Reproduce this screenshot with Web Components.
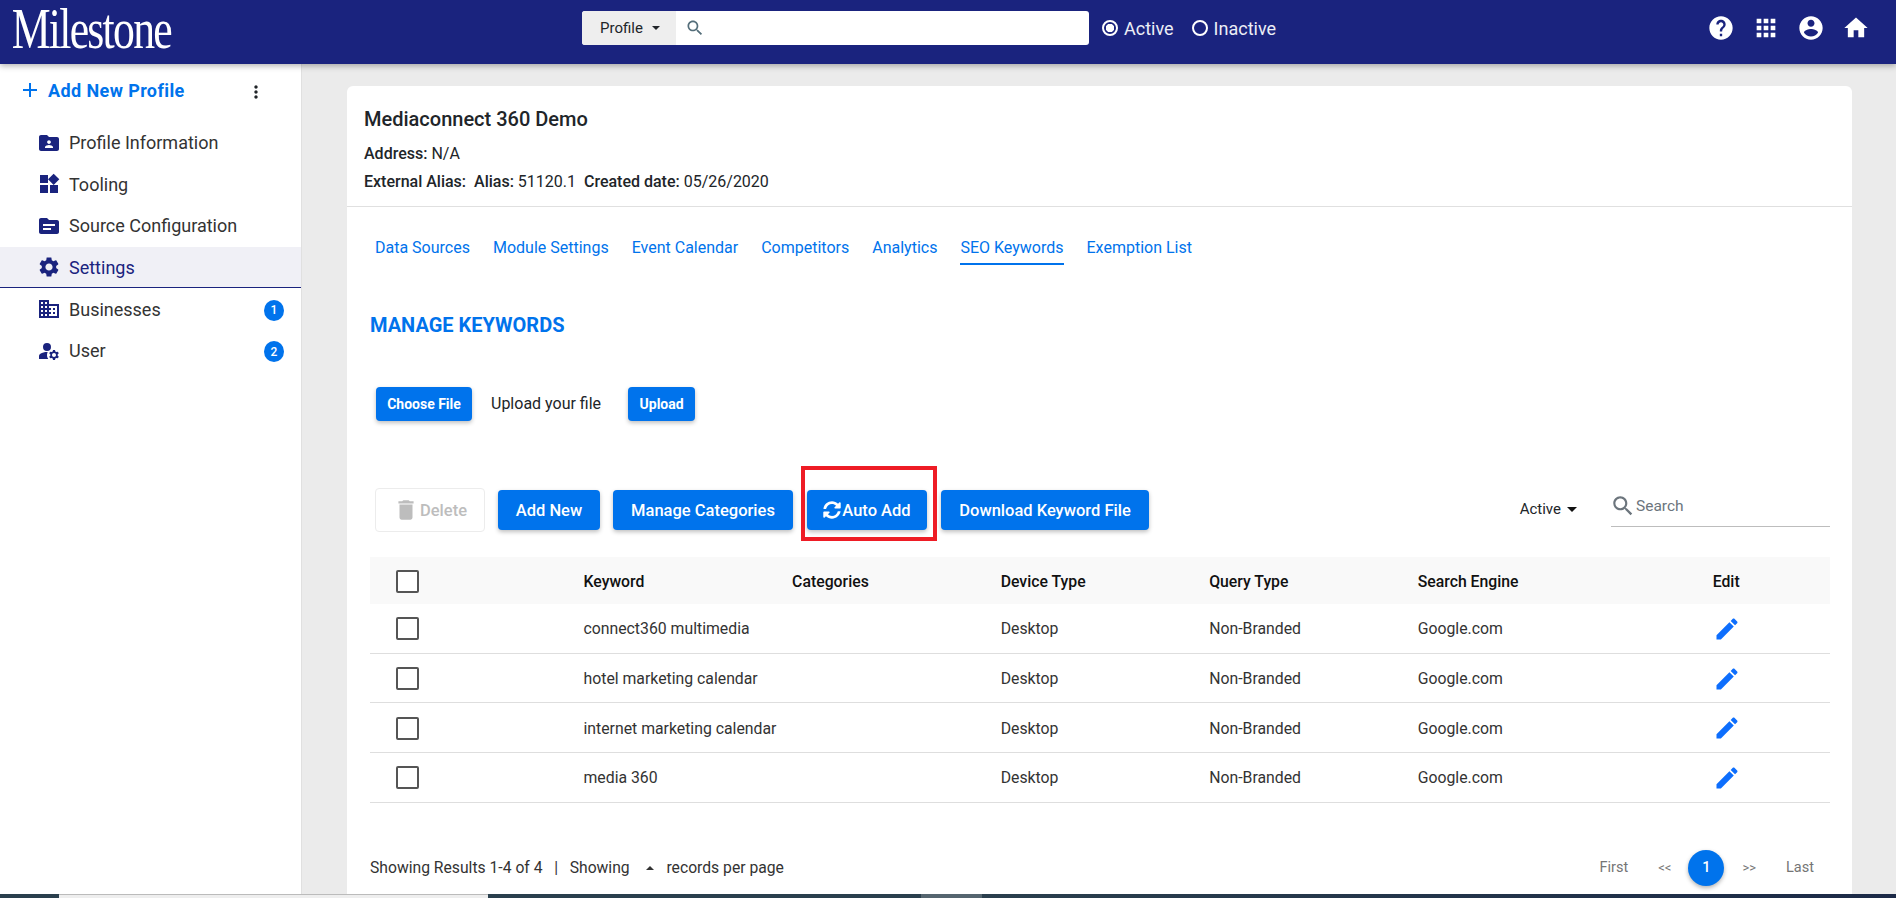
<!DOCTYPE html>
<html lang="en">
<head>
<meta charset="utf-8">
<title>Manage Keywords</title>
<style>
  html, body { margin: 0; height: 100%; overflow: hidden; }
  body { font-family: Roboto, "Liberation Sans", sans-serif; color: #212529; background: #ebebeb; }
  #app { display: flex; flex-direction: column; height: 898px; }
  #body { display: flex; flex: 1; min-height: 0; }
</style>
</head>
<body>
<div id="app">
  <app-header></app-header>
  <div id="body">
    <side-nav></side-nav>
    <profile-page></profile-page>
  </div>
  <bottom-strip></bottom-strip>
</div>

<script>
// material / fontawesome glyphs, drawn with currentColor
const ICONS = {
  help: 'M12 2C6.48 2 2 6.48 2 12s4.48 10 10 10 10-4.48 10-10S17.52 2 12 2zm1 17h-2v-2h2v2zm2.07-7.75l-.9.92C13.45 12.9 13 13.5 13 15h-2v-.5c0-1.1.45-2.1 1.17-2.83l1.24-1.26c.37-.36.59-.86.59-1.41 0-1.1-.9-2-2-2s-2 .9-2 2H8c0-2.21 1.79-4 4-4s4 1.79 4 4c0 .88-.36 1.68-.93 2.25z',
  apps: 'M4 8h4V4H4v4zm6 12h4v-4h-4v4zm-6 0h4v-4H4v4zm0-6h4v-4H4v4zm6 0h4v-4h-4v4zm6-10v4h4V4h-4zm-6 4h4V4h-4v4zm6 6h4v-4h-4v4zm0 6h4v-4h-4v4z',
  account: 'M12 2C6.48 2 2 6.48 2 12s4.48 10 10 10 10-4.48 10-10S17.52 2 12 2zm0 3c1.66 0 3 1.34 3 3s-1.34 3-3 3-3-1.34-3-3 1.34-3 3-3zm0 14.2c-2.5 0-4.71-1.28-6-3.22.03-1.99 4-3.08 6-3.08 1.99 0 5.97 1.09 6 3.08-1.29 1.94-3.5 3.22-6 3.22z',
  home: 'M10 20v-6h4v6h5v-8h3L12 3 2 12h3v8z',
  search: 'M15.5 14h-.79l-.28-.27C15.41 12.59 16 11.11 16 9.5 16 5.91 13.09 3 9.5 3S3 5.91 3 9.5 5.91 16 9.5 16c1.61 0 3.09-.59 4.23-1.57l.27.28v.79l5 4.99L20.49 19l-4.99-5zm-6 0C7.01 14 5 11.99 5 9.5S7.01 5 9.5 5 14 7.01 14 9.5 11.99 14 9.5 14z',
  folderPerson: 'M20 6h-8l-2-2H4c-1.1 0-1.99.9-1.99 2L2 18c0 1.1.9 2 2 2h16c1.1 0 2-.9 2-2V8c0-1.1-.9-2-2-2zm-8 3.2c1 0 1.9.8 1.9 1.9S13 13 12 13s-1.9-.8-1.9-1.9.9-1.9 1.9-1.9zm4 7.8H8v-1c0-1.33 2.67-2 4-2s4 .67 4 2v1z',
  widgets: 'M13 13v8h8v-8h-8zM3 21h8v-8H3v8zM3 3v8h8V3H3zm13.66-1.31L11 7.34 16.66 13l5.66-5.66-5.66-5.65z',
  topic: 'M20 6h-8l-2-2H4c-1.1 0-1.99.9-1.99 2L2 18c0 1.1.9 2 2 2h16c1.1 0 2-.9 2-2V8c0-1.1-.9-2-2-2zm-6 10H6v-2h8v2zm4-4H6v-2h12v2z',
  settings: 'M19.14 12.94c.04-.3.06-.61.06-.94 0-.32-.02-.64-.07-.94l2.03-1.58c.18-.14.23-.41.12-.61l-1.92-3.32c-.12-.22-.37-.29-.59-.22l-2.39.96c-.5-.38-1.03-.7-1.62-.94l-.36-2.54c-.04-.24-.24-.41-.48-.41h-3.84c-.24 0-.43.17-.47.41l-.36 2.54c-.59.24-1.13.57-1.62.94l-2.39-.96c-.22-.08-.47 0-.59.22L2.74 8.87c-.12.21-.08.47.12.61l2.03 1.58c-.05.3-.09.63-.09.94s.02.64.07.94l-2.03 1.58c-.18.14-.23.41-.12.61l1.92 3.32c.12.22.37.29.59.22l2.39-.96c.5.38 1.03.7 1.62.94l.36 2.54c.05.24.24.41.48.41h3.84c.24 0 .44-.17.47-.41l.36-2.54c.59-.24 1.13-.56 1.62-.94l2.39.96c.22.08.47 0 .59-.22l1.92-3.32c.12-.22.07-.47-.12-.61l-2.01-1.58zM12 15.6c-1.98 0-3.6-1.62-3.6-3.6s1.62-3.6 3.6-3.6 3.6 1.62 3.6 3.6-1.62 3.6-3.6 3.6z',
  domain: 'M12 7V3H2v18h20V7H12zM6 19H4v-2h2v2zm0-4H4v-2h2v2zm0-4H4V9h2v2zm0-4H4V5h2v2zm4 12H8v-2h2v2zm0-4H8v-2h2v2zm0-4H8V9h2v2zm0-4H8V5h2v2zm10 12h-8v-2h2v-2h-2v-2h2v-2h-2V9h8v10zm-2-8h-2v2h2v-2zm0 4h-2v2h2v-2z',
  manageUser: 'M10 4a4 4 0 1 0 0 8 4 4 0 0 0 0-8zM10.67 13.02C10.45 13.01 10.23 13 10 13c-2.42 0-4.68.67-6.61 1.82-.88.52-1.39 1.5-1.39 2.53V20h9.26c-.79-1.13-1.26-2.51-1.26-4 0-1.07.25-2.07.67-2.98zM20.75 16c0-.22-.03-.42-.06-.63l1.14-1.01-1-1.73-1.45.49c-.32-.27-.68-.48-1.08-.63L18 11h-2l-.3 1.49c-.4.15-.76.36-1.08.63l-1.45-.49-1 1.73 1.14 1.01c-.03.21-.06.41-.06.63s.03.42.06.63l-1.14 1.01 1 1.73 1.45-.49c.32.27.68.48 1.08.63L16 21h2l.3-1.49c.4-.15.76-.36 1.08-.63l1.45.49 1-1.73-1.14-1.01c.03-.21.06-.41.06-.63zM17 18c-1.1 0-2-.9-2-2s.9-2 2-2 2 .9 2 2-.9 2-2 2z',
  edit: 'M3 17.25V21h3.75L17.81 9.94l-3.75-3.75L3 17.25zM20.71 7.04c.39-.39.39-1.02 0-1.41l-2.34-2.34c-.39-.39-1.02-.39-1.41 0l-1.83 1.83 3.75 3.75 1.83-1.83z',
  trash: 'M6 19c0 1.1.9 2 2 2h8c1.1 0 2-.9 2-2V7H6v12zM19 4h-3.5l-1-1h-5l-1 1H5v2h14V4z',
  plus: 'M19 13h-6v6h-2v-6H5v-2h6V5h2v6h6v2z',
  kebab: 'M12 8c1.1 0 2-.9 2-2s-.9-2-2-2-2 .9-2 2 .9 2 2 2zm0 2c-1.1 0-2 .9-2 2s.9 2 2 2 2-.9 2-2-.9-2-2-2zm0 6c-1.1 0-2 .9-2 2s.9 2 2 2 2-.9 2-2-.9-2-2-2z',
};
const SYNC = 'M370.72 133.28C339.458 104.008 298.888 87.962 255.848 88c-77.458.068-144.328 53.178-162.791 126.85-1.344 5.363-6.122 9.15-11.651 9.15H24.103c-7.498 0-13.194-6.807-11.807-14.176C33.933 94.924 134.813 8 256 8c66.448 0 126.791 26.136 171.315 68.685L463.03 40.97C478.149 25.851 504 36.559 504 57.941V192c0 13.255-10.745 24-24 24H345.941c-21.382 0-32.09-25.851-16.971-40.971l41.75-41.749zM32 296h134.059c21.382 0 32.09 25.851 16.971 40.971l-41.75 41.75c31.262 29.273 71.835 45.319 114.876 45.28 77.418-.07 144.315-53.144 162.787-126.849 1.344-5.363 6.122-9.15 11.651-9.15h57.304c7.498 0 13.194 6.807 11.807 14.176C478.067 417.076 377.187 504 256 504c-66.448 0-126.791-26.136-171.315-68.685L48.97 471.03C33.851 486.149 8 475.441 8 454.059V320c0-13.255 10.745-24 24-24z';

const icon = (name, size) =>
  `<svg width="${size}" height="${size}" viewBox="0 0 24 24" fill="currentColor" aria-hidden="true"><path d="${ICONS[name]}"/></svg>`;

class AppHeader extends HTMLElement {
  constructor() {
    super();
    this.attachShadow({ mode: 'open' }).innerHTML = `
      <style>
        :host {
          display: grid;
          grid-template-columns: 582px 507px 1fr auto;
          align-items: center;
          height: 64px;
          background: #1a237e;
          color: #fff;
          box-shadow: 0 2px 6px rgba(0,0,0,.3);
          position: relative;
          z-index: 2;
        }
        .logo {
          font-family: "Liberation Serif", serif;
          font-size: 56px;
          line-height: 64px;
          letter-spacing: -2.2px;
          padding-left: 15px;
          margin-top: -6px;
          transform: scaleX(.78);
          transform-origin: 0 50%;
        }
        .search { display: flex; height: 34px; margin-top: -8px; background: #fff; border-radius: 3px; overflow: hidden; }
        .kind { display: flex; align-items: center; gap: 9px; width: 94px; box-sizing: border-box; padding-left: 18px; background: #eee; color: #212529; font-size: 15px; }
        .caret { width: 0; height: 0; border: 4.5px solid transparent; border-top-color: #212529; border-bottom: 0; }
        .glass { display: flex; align-items: center; padding-left: 9px; color: #546e7a; }
        .status { display: flex; align-items: center; margin-top: -8px; padding-left: 13px; font-size: 18px; color: #eceef6; }
        .radio { width: 16px; height: 16px; box-sizing: border-box; border: 2px solid #fff; border-radius: 50%; margin-right: 6px; position: relative; }
        .radio.on { background: radial-gradient(circle, #fff 0 4px, transparent 4.5px); }
        .status span { margin-right: 18px; }
        .tools { display: flex; gap: 17px; margin-top: -8px; padding-right: 26px; }
      </style>
      <div class="logo">Milestone</div>
      <div class="search">
        <div class="kind">Profile <i class="caret"></i></div>
        <div class="glass">${icon('search', 20)}</div>
      </div>
      <div class="status">
        <i class="radio on"></i><span>Active</span>
        <i class="radio"></i><span>Inactive</span>
      </div>
      <div class="tools">
        ${icon('help', 28)}${icon('apps', 28)}${icon('account', 28)}${icon('home', 28)}
      </div>
    `;
  }
}
customElements.define('app-header', AppHeader);

class NavItem extends HTMLElement {
  connectedCallback() {
    const badge = this.getAttribute('badge');
    this.attachShadow({ mode: 'open' }).innerHTML = `
      <style>
        :host {
          display: flex;
          align-items: center;
          height: 41.6px;
          box-sizing: border-box;
          padding: 0 17px 0 37px;
          font-size: 18px;
          color: #333;
        }
        :host([active]) { background: #f0f0f6; color: #1a237e; border-bottom: 1px solid #1a237e; }
        svg { color: #1a237e; flex: none; margin-right: 8px; }
        .text { flex: 1; }
        .badge {
          width: 20px; height: 21px; border-radius: 50%;
          background: #0073ec; color: #fff;
          font-size: 12px; font-weight: 500;
          display: flex; align-items: center; justify-content: center;
          margin: 2px 0 0;
        }
      </style>
      ${icon(this.getAttribute('icon'), 24)}
      <span class="text"><slot></slot></span>
      ${badge ? `<span class="badge">${badge}</span>` : ''}
    `;
  }
}
customElements.define('nav-item', NavItem);

class SideNav extends HTMLElement {
  constructor() {
    super();
    this.attachShadow({ mode: 'open' }).innerHTML = `
      <style>
        :host {
          display: block;
          width: 302px;
          flex: none;
          box-sizing: border-box;
          background: #fff;
          border-right: 1px solid #e0e0e0;
        }
        .add {
          display: flex;
          align-items: center;
          height: 58px;
          padding: 0 0 6px 18px;
          box-sizing: border-box;
          color: #0073ec;
          font-size: 18px;
          font-weight: 700;
          letter-spacing: .4px;
        }
        .add span { flex: 1; padding-left: 6px; }
        .add svg:last-child { color: #212529; margin: 4px 35px 0 0; }
      </style>
      <div class="add">${icon('plus', 24)}<span>Add New Profile</span>${icon('kebab', 20)}</div>
      <slot></slot>
    `;
    this.innerHTML = `
      <nav-item icon="folderPerson">Profile Information</nav-item>
      <nav-item icon="widgets">Tooling</nav-item>
      <nav-item icon="topic">Source Configuration</nav-item>
      <nav-item icon="settings" active>Settings</nav-item>
      <nav-item icon="domain" badge="1">Businesses</nav-item>
      <nav-item icon="manageUser" badge="2">User</nav-item>
    `;
  }
}
customElements.define('side-nav', SideNav);

class KwButton extends HTMLElement {
  connectedCallback() {
    this.attachShadow({ mode: 'open' }).innerHTML = `
      <style>
        :host {
          display: inline-flex;
          align-items: center;
          justify-content: center;
          box-sizing: border-box;
          height: 40px;
          border-radius: 4px;
          background: #0073ec;
          color: #fff;
          font-size: 16.5px;
          font-weight: 500;
          white-space: nowrap;
          box-shadow: 0 2px 4px rgba(0,0,0,.25);
        }
        :host([small]) { height: 34px; font-size: 14px; font-weight: 700; }
        :host([disabled]) {
          height: 44px;
          background: #fff;
          color: #bdbdbd;
          border: 1px solid #ececec;
          box-shadow: none;
        }
      </style>
      <slot></slot>
    `;
  }
}
customElements.define('kw-button', KwButton);

class KeywordTable extends HTMLElement {
  constructor() {
    super();
    const rows = [
      'connect360 multimedia',
      'hotel marketing calendar',
      'internet marketing calendar',
      'media 360',
    ];
    const cols = ['Keyword', 'Categories', 'Device Type', 'Query Type', 'Search Engine'];
    this.attachShadow({ mode: 'open' }).innerHTML = `
      <style>
        :host { display: block; font-size: 15.8px; color: #333; }
        .row {
          display: grid;
          grid-template-columns: 213.5px 208.6px 208.6px 208.5px 208.5px 295px 1fr;
          align-items: center;
          height: 49.7px;
          box-sizing: border-box;
          border-bottom: 1px solid #dedede;
          padding-top: 1px;
        }
        .row.head { height: 47px; background: #f9f9f9; border: 0; color: #111; font-weight: 500; }
        .box { width: 23px; height: 23px; box-sizing: border-box; margin-left: 26px; border: 2px solid #555; border-radius: 2px; background: #fff; }
        .pen { color: #0d6efd; display: flex; }
      </style>
      <div class="row head">
        <i class="box"></i>
        ${cols.map(c => `<span>${c}</span>`).join('')}
        <span>Edit</span>
      </div>
      ${rows.map(r => `
        <div class="row">
          <i class="box"></i>
          <span>${r}</span><span></span>
          <span>Desktop</span><span>Non-Branded</span><span>Google.com</span>
          <span class="pen">${icon('edit', 28)}</span>
        </div>
      `).join('')}
    `;
  }
}
customElements.define('keyword-table', KeywordTable);

class PagerBar extends HTMLElement {
  constructor() {
    super();
    this.attachShadow({ mode: 'open' }).innerHTML = `
      <style>
        :host { display: flex; align-items: center; justify-content: space-between; font-size: 15.7px; color: #333; }
        .info { display: flex; align-items: center; gap: 6px; white-space: pre; }
        .up { width: 0; height: 0; border: 4px solid transparent; border-bottom-color: #333; border-top: 0; margin: 0 3px 0 6px; }
        .pages { display: flex; align-items: center; color: #757575; font-size: 14.5px; padding-right: 16px; }
        .pages span { margin-left: 30px; }
        .pages span:first-child { margin-left: 0; }
        .pages .small { font-size: 13px; }
        .pages b {
          width: 36px; height: 36px; border-radius: 50%; margin-left: 17px; margin-right: -12px;
          background: #0073ec; color: #fff; font-weight: 500;
          display: flex; align-items: center; justify-content: center;
          box-shadow: 0 2px 4px rgba(0,0,0,.3);
        }
      </style>
      <div class="info">Showing Results 1-4 of 4   |   Showing <i class="up"></i> records per page</div>
      <div class="pages">
        <span>First</span><span class="small">&lt;&lt;</span><b>1</b><span class="small">&gt;&gt;</span><span>Last</span>
      </div>
    `;
  }
}
customElements.define('pager-bar', PagerBar);

class ProfilePage extends HTMLElement {
  constructor() {
    super();
    const tabs = ['Data Sources', 'Module Settings', 'Event Calendar', 'Competitors', 'Analytics', 'SEO Keywords', 'Exemption List'];
    this.attachShadow({ mode: 'open' }).innerHTML = `
      <style>
        :host {
          display: block;
          flex: 1;
          min-width: 0;
          padding: 22px 44px 0 45px;
        }
        .card {
          height: 100%;
          box-sizing: border-box;
          background: #fff;
          border-radius: 6px 6px 0 0;
          overflow: hidden;
          font-size: 16px;
        }
        .summary { height: 121px; box-sizing: border-box; padding: 22px 17px 0; border-bottom: 1px solid #e0e0e0; color: #212529; }
        h1 { margin: 0 0 15px; font-size: 20px; font-weight: 500; line-height: 22px; }
        p { margin: 0 0 10px; line-height: 18px; }
        b { font-weight: 500; }
        .tabs { display: flex; gap: 23px; padding: 31px 0 0 28px; }
        .tabs a { color: #0073ec; font-size: 16px; line-height: 20px; padding: 0 0 5px; }
        .tabs a.on { border-bottom: 2px solid #0073ec; }
        .body { padding: 0 22px 0 23px; }
        h2 { margin: 48px 0 0; color: #0073ec; font-size: 20px; font-weight: 700; line-height: 24px; }
        .upload { display: flex; align-items: center; gap: 19px; margin-top: 50px; padding-left: 6px; }
        .upload kw-button:first-child { width: 96px; }
        .upload kw-button:last-child { width: 67px; margin-left: 8px; }
        .upload span { margin-top: -2px; }
        .actions { display: flex; align-items: center; height: 44px; margin-top: 67px; margin-left: 5px; }
        .actions > * { flex: none; }
        .delete { width: 110px; gap: 1px; }
        .add { width: 102px; margin-left: 13px; }
        .cats { width: 180px; margin-left: 13px; }
        .auto { width: 120px; margin-left: 14px; position: relative; }
        .auto svg { margin-right: 1px; }
        .dl { width: 208px; margin-left: 14px; }
        /* red highlight from the annotated capture */
        .mark { position: absolute; left: -6px; top: -24px; width: 136px; height: 75px; box-sizing: border-box; border: 4px solid #ee1c25; }
        .filter { display: flex; align-items: center; margin-left: auto; font-size: 15px; gap: 6px; margin-top: -2px; margin-right: 34px; }
        .caret { width: 0; height: 0; border: 5.5px solid transparent; border-top-color: #111; border-bottom: 0; }
        .find { display: flex; align-items: center; width: 219px; height: 40px; box-sizing: border-box; border-bottom: 1px solid #bdbdbd; color: #6c757d; font-size: 15.5px; margin-top: -7px; }
        .find svg { margin: 0 0 0 -1px; }
        keyword-table { margin-top: 25px; }
        pager-bar { margin-top: 47px; }
      </style>
      <div class="card">
        <div class="summary">
          <h1>Mediaconnect 360 Demo</h1>
          <p><b>Address:</b> N/A</p>
          <p><b>External Alias:</b> &nbsp;<b>Alias:</b> 51120.1 &nbsp;<b>Created date:</b> 05/26/2020</p>
        </div>
        <div class="tabs">
          ${tabs.map(t => `<a class="${t === 'SEO Keywords' ? 'on' : ''}">${t}</a>`).join('')}
        </div>
        <div class="body">
          <h2>MANAGE KEYWORDS</h2>
          <div class="upload">
            <kw-button small>Choose File</kw-button>
            <span>Upload your file</span>
            <kw-button small>Upload</kw-button>
          </div>
          <div class="actions">
            <kw-button class="delete" disabled>${icon('trash', 26)}Delete</kw-button>
            <kw-button class="add">Add New</kw-button>
            <kw-button class="cats">Manage Categories</kw-button>
            <kw-button class="auto"><svg width="18" height="18" viewBox="0 0 512 512" fill="currentColor"><path d="${SYNC}"/></svg>Auto Add<i class="mark"></i></kw-button>
            <kw-button class="dl">Download Keyword File</kw-button>
            <div class="filter">Active <i class="caret"></i></div>
            <div class="find">${icon('search', 26)}Search</div>
          </div>
          <keyword-table></keyword-table>
          <pager-bar></pager-bar>
        </div>
      </div>
    `;
  }
}
customElements.define('profile-page', ProfilePage);

class BottomStrip extends HTMLElement {
  constructor() {
    super();
    this.attachShadow({ mode: 'open' }).innerHTML = `
      <style>
        :host { display: grid; grid-template-columns: 59px 429px 433px 61px 1fr; height: 4px; flex: none; background: #2a3f4d; position: relative; z-index: 3; }
        .light { background: #eee; border-top: 1px solid #bbb; box-sizing: border-box; }
        .gray { background: #55656f; grid-column: 4; }
        .end { grid-column: 5; background: linear-gradient(90deg, #2a3f4d, #1c2a47); }
      </style>
      <i></i><i class="light"></i><i></i><i class="gray"></i><i class="end"></i>
    `;
  }
}
customElements.define('bottom-strip', BottomStrip);
</script>
</body>
</html>
